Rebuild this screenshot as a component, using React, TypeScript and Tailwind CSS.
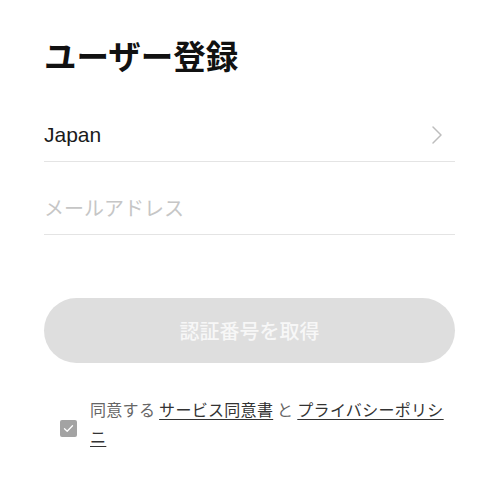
import React from "react";

const jp = { fontFamily: '"Noto Sans CJK JP", "Noto Sans", sans-serif' };
const latin = { fontFamily: '"Liberation Sans", "Noto Sans CJK JP", sans-serif' };

export default function App() {
  return (
    <div className="w-[500px] h-[486px] bg-white pl-[44px] pr-[45px] pt-[35px]" style={jp}>
      <h1 className="text-[32.5px] leading-[40px] font-bold text-[#111111]">ユーザー登録</h1>

      <div className="mt-[46px] flex items-center justify-between pb-[12px] border-b border-[#e4e4e4]">
        <span className="text-[21px] leading-[28px] text-[#1a1a1a]" style={latin}>
          Japan
        </span>
        <svg width="12" height="20" viewBox="0 0 12 20" className="mr-[12px]">
          <path d="M2 2 L10 10 L2 18" fill="none" stroke="#bdbdbd" strokeWidth="1.5" strokeLinecap="round" strokeLinejoin="round" />
        </svg>
      </div>

      <div className="pt-[32px] pb-[12px] border-b border-[#e4e4e4]">
        <span className="text-[20px] leading-[28px] text-[#c6c6c6]">メールアドレス</span>
      </div>

      <button className="mt-[63px] w-full h-[65px] rounded-full bg-[#dedede] text-[20px] text-[#f7f7f7] font-medium">
        認証番号を取得
      </button>

      <div className="mt-[33px] pl-[16px] flex items-start gap-[13px]">
        <div className="mt-[24px] w-[17px] h-[17px] shrink-0 rounded-[2px] bg-[#a3a3a3] flex items-center justify-center">
          <svg width="11" height="9" viewBox="0 0 11 9">
            <path d="M1.5 4.8 L4.2 7.2 L9.5 1.8" fill="none" stroke="#ffffff" strokeWidth="1.3" strokeLinecap="round" strokeLinejoin="round" />
          </svg>
        </div>
        <p className="w-[358px] text-[16px] leading-[27px] tracking-[0.3px] text-[#666666]">
          同意する <span className="underline underline-offset-[3px] text-[#333333]">サービス同意書</span> と{" "}
          <span className="underline underline-offset-[3px] text-[#333333]">プライバシーポリシニ</span>
        </p>
      </div>
    </div>
  );
}
